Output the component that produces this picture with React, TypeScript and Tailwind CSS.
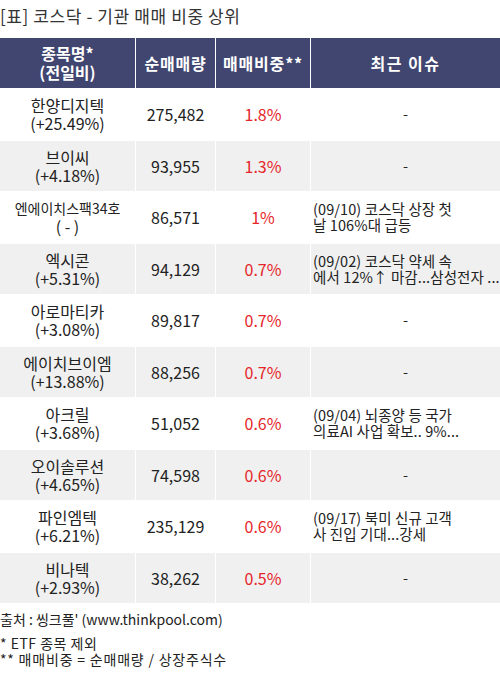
import React from "react";

type Row = { name: string; chg: string; vol: string; pct: string; issue?: string[]; small?: boolean };

const rows: Row[] = [
  { name: "한양디지텍", chg: "(+25.49%)", vol: "275,482", pct: "1.8%" },
  { name: "브이씨", chg: "(+4.18%)", vol: "93,955", pct: "1.3%" },
  { name: "엔에이치스팩34호", chg: "( - )", vol: "86,571", pct: "1%", issue: ["(09/10) 코스닥 상장 첫", "날 106%대 급등"], small: true },
  { name: "엑시콘", chg: "(+5.31%)", vol: "94,129", pct: "0.7%", issue: ["(09/02) 코스닥 약세 속", "에서 12%↑ 마감...삼성전자 ..."] },
  { name: "아로마티카", chg: "(+3.08%)", vol: "89,817", pct: "0.7%" },
  { name: "에이치브이엠", chg: "(+13.88%)", vol: "88,256", pct: "0.7%" },
  { name: "아크릴", chg: "(+3.68%)", vol: "51,052", pct: "0.6%", issue: ["(09/04) 뇌종양 등 국가", "의료AI 사업 확보.. 9%..."] },
  { name: "오이솔루션", chg: "(+4.65%)", vol: "74,598", pct: "0.6%" },
  { name: "파인엠텍", chg: "(+6.21%)", vol: "235,129", pct: "0.6%", issue: ["(09/17) 북미 신규 고객", "사 진입 기대...강세"] },
  { name: "비나텍", chg: "(+2.93%)", vol: "38,262", pct: "0.5%" },
];

const font = { fontFamily: '"Noto Sans CJK KR", "Noto Sans", sans-serif' };

export default function App() {
  return (
    <div className="w-[500px] h-[675px] bg-white text-[#222]" style={font}>
      <div className="h-[38px] pt-[4px] text-[17px] leading-[24px] text-[#333] tracking-[0.6px]">[표] 코스닥 - 기관 매매 비중 상위</div>
      <div className="grid grid-cols-[135px_79px_94px_1fr] gap-px bg-white">
        <div className="h-[50px] bg-[#40466f] text-white font-bold text-[16px] leading-[19px] flex flex-col items-center justify-center">
          <span className="block">종목명*</span>
          <span className="block">(전일비)</span>
        </div>
        <div className="h-[50px] bg-[#40466f] text-white font-bold text-[16px] flex items-center justify-center tracking-[0.8px]">순매매량</div>
        <div className="h-[50px] bg-[#40466f] text-white font-bold text-[16px] flex items-center justify-center tracking-[0.8px]">매매비중**</div>
        <div className="h-[50px] bg-[#40466f] text-white font-bold text-[16px] flex items-center justify-center tracking-[1.5px]">최근 이슈</div>
        {rows.map((r, i) => {
          const bg = i % 2 === 1 ? "bg-[#f0f0f0]" : "bg-white";
          return (
            <React.Fragment key={i}>
              <div className={`h-[50.5px] ${bg} flex flex-col items-center justify-center leading-[18px] ${r.small ? "text-[14px]" : "text-[16px]"}`}>
                <span className="block">{r.name}</span>
                <span className="block text-[16px]">{r.chg}</span>
              </div>
              <div className={`h-[50.5px] ${bg} flex items-center justify-center text-[16px]`}>{r.vol}</div>
              <div className={`h-[50.5px] ${bg} flex items-center justify-center text-[16px] text-[#e5262a]`}>{r.pct}</div>
              <div className={`h-[50.5px] ${bg} flex items-center ${r.issue ? "justify-start pl-[2px]" : "justify-center"} text-[14.5px] leading-[16px] tracking-[0.1px]`}>
                {r.issue ? (
                  <div className="flex flex-col">
                    {r.issue.map((l, j) => (
                      <span key={j} className="block whitespace-nowrap">{l}</span>
                    ))}
                  </div>
                ) : (
                  <span>-</span>
                )}
              </div>
            </React.Fragment>
          );
        })}
      </div>
      <div className="pt-[6px] text-[14px] text-[#222]">
        <div className="leading-[20px]">출처 : 씽크풀' (www.thinkpool.com)</div>
        <div className="mt-[6px] leading-[16px] tracking-[0.5px]">* ETF 종목 제외</div>
        <div className="leading-[16px] tracking-[0.8px]">** 매매비중 = 순매매량 / 상장주식수</div>
      </div>
    </div>
  );
}
